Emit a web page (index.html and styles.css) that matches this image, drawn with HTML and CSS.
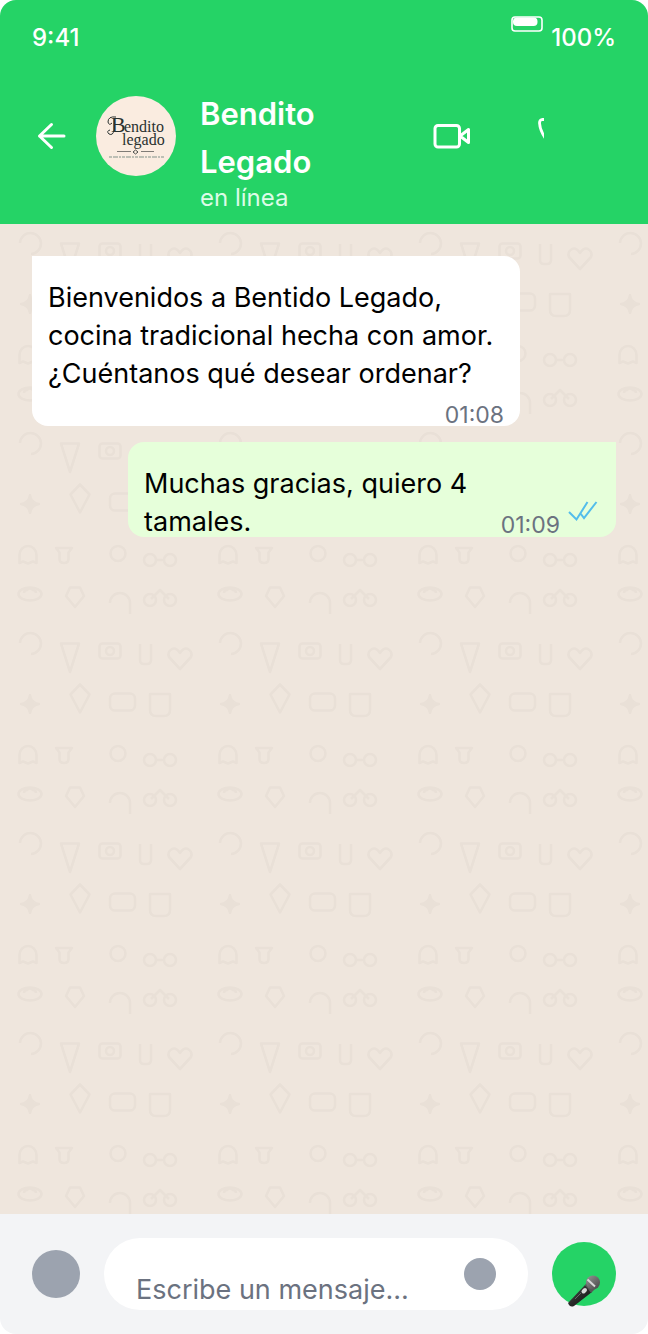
FILE: index.html
```html
<!DOCTYPE html>
<html lang="es">
<head>
<meta charset="utf-8">
<meta name="viewport" content="width=device-width, initial-scale=1">
<title>Bendito Legado</title>
<link rel="stylesheet" href="styles.css">
</head>
<body>
<div class="phone">
  <header class="header">
    <div class="status">
      <span>9:41</span>
      <span class="battery-group">
        <svg class="battery" viewBox="0 0 32 16" aria-hidden="true"><rect x="1" y="1" width="30" height="14" rx="3" fill="none" stroke="#fff" stroke-width="1.600"/><rect x="2" y="1.500" width="24.500" height="8.500" rx="4" fill="#fff"/></svg>
        <span>100%</span>
      </span>
    </div>
    <div class="contact-bar">
      <button class="icon-button back" aria-label="Volver">
        <svg viewBox="0 0 40 40"><path d="M32 20H7.500M19.500 8.500L7.500 20L19.500 31.500" fill="none" stroke="#fff" stroke-width="3" stroke-linecap="round" stroke-linejoin="round"/></svg>
      </button>
      <div class="avatar">
        <svg viewBox="0 0 80 80" role="img" aria-label="Bendito legado">
          <circle cx="40" cy="40" r="40" fill="#faece0"/>
          <g fill="#29312f" font-family="'Liberation Serif', serif">
            <text x="15" y="36" font-size="22">B<tspan x="28" font-size="16">endito</tspan></text>
            <text x="26" y="49" font-size="16">legado</text>
          </g>
          <g fill="none" stroke="#29312f" stroke-width="1">
            <path d="M20 21Q12 20 12 26Q13 30 16 27M18 23V34Q17 40 13 38Q10 35 14 34"/>
            <path d="M21 55.500H35M45 55.500H58" stroke="#807c77"/>
            <path d="M37 56L39.500 54L42 56L39.500 58Z" stroke="#4b4e4b"/>
            <path d="M13 61H68" stroke="#81928a" stroke-dasharray="3 1 5 1 2 1"/>
          </g>
        </svg>
      </div>
      <div class="contact">
        <h1 class="name">Bendito Legado</h1>
        <p class="presence">en línea</p>
      </div>
      <div class="actions">
        <button class="icon-button" aria-label="Videollamada">
          <svg viewBox="0 0 40 40"><rect x="3" y="9.500" width="24.500" height="21.500" rx="3" fill="none" stroke="#fff" stroke-width="3"/><path d="M28 20L36.500 13.500V26.500Z" fill="none" stroke="#fff" stroke-width="3" stroke-linejoin="round"/></svg>
        </button>
        <button class="icon-button call" aria-label="Llamar">
          <svg viewBox="0 0 12 40"><path d="M13 3.500H10Q7.500 4 7.500 7Q8 15 14 23" fill="none" stroke="#fff" stroke-width="2.800"/></svg>
        </button>
      </div>
    </div>
  </header>

  <main class="chat">
    <svg class="wallpaper" aria-hidden="true">
      <defs>
        <pattern id="doodles" width="200" height="200" patternUnits="userSpaceOnUse">
          <g fill="none" stroke="#e9e0d7" stroke-width="2.600" stroke-linejoin="round">
            <path d="M20 19A10.500 10.500 0 1 1 31 30"/>
            <path d="M61 19.500H79L70 48Z"/>
            <rect x="99.500" y="19.500" width="21" height="15" rx="3"/><circle cx="110" cy="27" r="4"/>
            <path d="M140 20V36Q140 40 144 40H147Q151 40 151 36V20"/>
            <path d="M180 45L169 33Q167 28 172 25Q176 23 180 29Q184 23 188 25Q193 28 191 33Z"/>
            <path d="M80 60.500L89.500 70.500L80 88.500L70.500 70.500Z"/>
            <rect x="110" y="69.500" width="25" height="17" rx="5"/>
            <path d="M150 70H170V86Q170 92 164 92H156Q150 92 150 86Z"/>
            <path d="M19.500 139V131A8.500 9 0 0 1 36.500 131V139L33 137.500L28 139.500L23 137.500Z"/>
            <path d="M56 124H72L68.500 128.500V135Q68.500 139 64 139Q59.500 139 59.500 135V128.500Z"/>
            <circle cx="118" cy="129.500" r="7.500"/>
            <circle cx="150" cy="136" r="6"/><circle cx="170" cy="136" r="6"/><path d="M156 136H164"/>
            <ellipse cx="30" cy="170" rx="11.500" ry="6.500"/><path d="M24 169Q24 166 27 166Q30 163 33 166Q36 166 36 169"/>
            <path d="M70 163.500H80L84 172L75 183L66 172Z"/>
            <path d="M110 179A10 10 0 0 1 130 179V190"/>
            <circle cx="150" cy="176" r="6"/><circle cx="170" cy="176" r="6"/><path d="M151 175L160 166L169 175"/>
          </g>
          <path d="M30 70Q31 79 40 80Q31 81 30 90Q29 81 20 80Q29 79 30 70Z" fill="#e9e0d7" stroke="#e9e0d7" stroke-width="2"/>
        </pattern>
      </defs>
      <rect width="100%" height="100%" fill="url(#doodles)"/>
    </svg>
    <article class="bubble received">
      <p class="text">Bienvenidos a Bentido Legado, cocina tradicional hecha con amor. ¿Cuéntanos qué desear ordenar?</p>
      <div class="meta"><time>01:08</time></div>
    </article>
    <article class="bubble sent">
      <p class="text">Muchas gracias, quiero 4 tamales.</p>
      <div class="meta"><time>01:09</time>
        <svg class="ticks" viewBox="0 0 32 24" role="img" aria-label="Leído"><path d="M1 12L8.500 19.500L19.500 2M12.500 13.500L16 18L28.500 2" fill="none" stroke="#53bdeb" stroke-width="2"/></svg>
      </div>
    </article>
  </main>

  <footer class="composer">
    <button class="emoji" aria-label="Emojis"></button>
    <div class="field">
      <input class="message" type="text" placeholder="Escribe un mensaje..." aria-label="Mensaje">
      <button class="attach" aria-label="Adjuntar"></button>
    </div>
    <button class="mic" aria-label="Grabar audio">
      <svg viewBox="0 0 64 64">
        <defs>
          <linearGradient id="handle" x1="0" y1="0" x2="1" y2="1"><stop offset="0" stop-color="#5b5b5b"/><stop offset=".5" stop-color="#292929"/><stop offset="1" stop-color="#111"/></linearGradient>
          <linearGradient id="head" x1="0" y1="0" x2="1" y2="1"><stop offset="0" stop-color="#969696"/><stop offset="1" stop-color="#444"/></linearGradient>
        </defs>
        <path d="M33 43L40 50L22 64Q18 66 16 61Z" fill="url(#handle)"/>
        <path d="M33 43L37 38L44 46L39 51Z" fill="#555"/>
        <circle cx="41" cy="40.500" r="7" fill="url(#head)"/>
        <path d="M35.500 37.500L43 44.500" stroke="#d9d9d9" stroke-width="2"/>
        <path d="M31.500 49.500L33 48" stroke="#d8d8d8" stroke-width="4" stroke-linecap="round"/>
        <path d="M23 57L29 51" stroke="#666" stroke-width="1"/>
      </svg>
    </button>
  </footer>
</div>
</body>
</html>
```
FILE: styles.css
```css
* {
  box-sizing: border-box;
}

body {
  margin: 0;
  background: #fff;
  color: #000;
  font-family: Inter, "Liberation Sans", sans-serif;
}

button {
  flex: none;
  padding: 0;
  border: 0;
  background: none;
}

svg {
  display: block;
}

h1,
p {
  margin: 0;
}

.phone {
  display: flex;
  flex-direction: column;
  min-height: 100vh;
  overflow: hidden;
  border-radius: 16px;
}

.header {
  padding: 16px 32px 14px;
  background: #25d366;
  color: #fff;
}

.status {
  display: flex;
  justify-content: space-between;
  height: 74px;
  padding-top: 6px;
  font-size: 24px;
  font-weight: 500;
  line-height: 32px;
}

.battery-group {
  display: flex;
  gap: 8px;
}

.battery {
  width: 32px;
  height: 16px;
  margin-top: -6px;
}

.contact-bar {
  display: flex;
  align-items: flex-start;
}

.icon-button,
.avatar {
  display: flex;
  align-items: center;
  height: 92px;
}

.icon-button svg {
  width: 40px;
  height: 40px;
}

.avatar {
  flex: none;
  width: 80px;
  margin: 0 24px;
}

.avatar svg {
  width: 80px;
  height: 80px;
}

.contact {
  flex: 1;
  max-width: 184px;
}

.name {
  font-size: 31px;
  font-weight: 600;
  line-height: 48px;
}

.presence {
  color: #dcfce7;
  font-size: 24px;
  line-height: 24px;
}

.actions {
  display: flex;
  gap: 60px;
  margin-left: 48px;
}

.icon-button.call svg {
  width: 12px;
}

.chat {
  position: relative;
  display: flex;
  flex: 1;
  flex-direction: column;
  gap: 16px;
  padding: 32px;
  background: #efe6dd;
}

.wallpaper {
  position: absolute;
  inset: 0;
  width: 100%;
  height: 100%;
}

.bubble {
  position: relative;
  display: flex;
  padding: 23px 16px 0;
  border-radius: 16px;
}

.received {
  flex-direction: column;
  gap: 8px;
  margin-right: 96px;
  border-top-left-radius: 0;
  background: #fff;
}

.sent {
  align-items: flex-end;
  margin-left: 96px;
  border-top-right-radius: 0;
  background: #e6ffda;
}

.text {
  flex: 1;
  font-size: 27px;
  line-height: 38px;
}

.sent .text {
  margin-bottom: -4px;
}

.meta {
  display: flex;
  align-items: flex-end;
  justify-content: flex-end;
  gap: 8px;
  color: #6b7280;
  font-size: 23px;
  line-height: 24px;
}

.received .meta {
  height: 25px;
  line-height: 22px;
  align-items: flex-end;
}

.ticks {
  width: 32px;
  height: 24px;
  margin-bottom: 13px;
}

.composer {
  display: flex;
  align-items: center;
  gap: 24px;
  padding: 24px 32px;
  background: #f3f4f6;
}

.emoji {
  width: 48px;
  height: 48px;
  border-radius: 50%;
  background: #9ca3af;
}

.field {
  display: flex;
  flex: 1;
  align-items: center;
  min-width: 0;
  height: 72px;
  padding: 0 32px;
  border-radius: 36px;
  background: #fff;
}

.message {
  flex: 1;
  min-width: 0;
  height: 72px;
  padding: 30px 0 0;
  border: 0;
  outline: 0;
  background: transparent;
  color: #000;
  font: 27px Inter, "Liberation Sans", sans-serif;
}

.message::placeholder {
  color: #6b7280;
  opacity: 1;
}

.attach {
  width: 32px;
  height: 32px;
  border-radius: 50%;
  background: #9ca3af;
}

.mic {
  width: 64px;
  height: 64px;
  border-radius: 50%;
  background: #25d366;
}

.mic svg {
  width: 64px;
  height: 64px;
  overflow: visible;
}
```
